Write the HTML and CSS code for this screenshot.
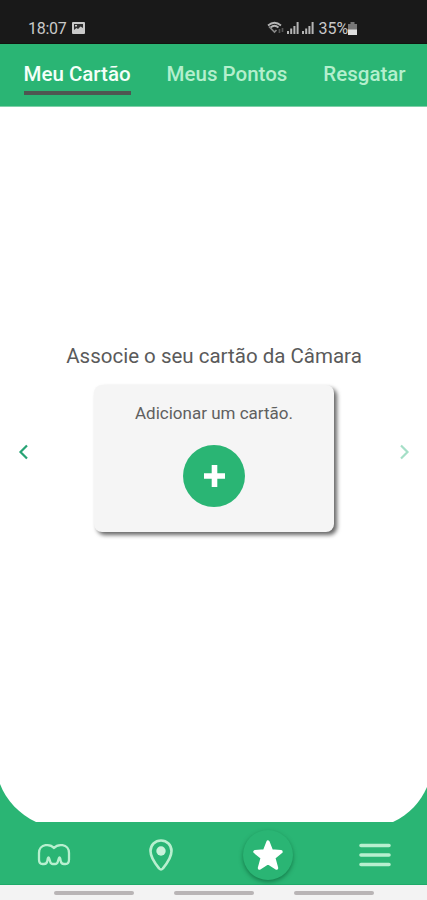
FILE: index.html
```
<!DOCTYPE html>
<html lang="pt">
<head>
  <meta charset="utf-8">
  <meta name="viewport" content="width=device-width, initial-scale=1">
  <title>Meu Cartão</title>
  <link rel="stylesheet" href="styles.css">
</head>
<body>

<div class="app">

  <div class="status-bar">
    <span class="clock">18:07</span>
    <svg class="photo-icon" width="13" height="12" viewBox="0 0 13 12">
      <rect width="13" height="12" rx="1" fill="#c9c9c9"/>
      <path d="M2 2h9v4L8.500 4.500 6 7 4.500 6 2 8z" fill="#303030"/>
      <rect x="3" y="3" width="2" height="1.500" fill="#c9c9c9"/>
    </svg>
    <div class="status-right">
      <svg width="17" height="14" viewBox="0 0 17 14" fill="none" stroke="#b5b5b5" stroke-width="1.700">
        <path d="M1 4.500Q7.500-1 14 4.500M3.500 6.500Q7.500 3 11.500 6.500"/>
        <path d="M2 5.500 7.500 11l2-2" stroke="#888"/>
        <path d="M12.500 8v4M15.500 7v4" stroke="#555"/>
      </svg>
      <svg class="signal" width="12" height="12" viewBox="0 0 12 12" fill="#b5b5b5">
        <path d="M0 9h2v3H0zM3.200 6.500h2V12h-2zM6.400 4h2v8h-2zM9.600 0h2v12h-2z"/>
      </svg>
      <svg class="signal" width="12" height="12" viewBox="0 0 12 12" fill="#b5b5b5">
        <path d="M0 9h2v3H0zM3.200 6.500h2V12h-2zM6.400 4h2v8h-2zM9.600 0h2v12h-2z"/>
      </svg>
      <span class="battery">35%</span>
      <svg width="9" height="13" viewBox="0 0 9 13">
        <path d="M2.500 0h4v2H9v6H0V2h2.500z" fill="#777"/>
        <path d="M0 7.500h9V13H0z" fill="#dedede"/>
      </svg>
    </div>
  </div>

  <div class="tabs">
    <div class="tab active">Meu Cartão</div>
    <div class="tab">Meus Pontos</div>
    <div class="tab">Resgatar</div>
  </div>

  <div class="content">
    <svg class="arrow" width="11" height="16" viewBox="0 0 11 16">
      <path d="M9 1.500 2.500 8 9 14.500" fill="none" stroke="#27a374" stroke-width="2.200"/>
    </svg>
    <div class="card-area">
      <div class="card-title">Associe o seu cartão da Câmara</div>
      <div class="card">
        <div class="card-text">Adicionar um cartão.</div>
        <div class="add-button">
          <svg width="24" height="24" viewBox="0 0 24 24">
            <path d="M12.500 1v22M2 12h21" stroke="#fff" stroke-width="5.600"/>
          </svg>
        </div>
      </div>
    </div>
    <svg class="arrow" width="11" height="16" viewBox="0 0 11 16">
      <path d="M2 1.500 8.500 8 2 14.500" fill="none" stroke="#a5dfc7" stroke-width="2.200"/>
    </svg>
  </div>

  <!-- white sheet closing over the green nav -->
  <svg class="curve" width="427" height="38" viewBox="0 0 427 38">
    <path d="M0 0C6 16 20 31 36 38H393C409 31 421 17 427 3V0z" fill="#fff"/>
  </svg>

  <div class="nav">
    <div class="nav-item">
      <svg width="34" height="24" viewBox="0 0 34 24">
        <path d="M17 5C14.500 2 11 1.800 8.500 2.200 4.500 2.800 2 6 2 10V16.500C2 19.500 3.200 21 5.500 21H7C9 21 10 19.800 10.300 18L10.800 15.500Q11.500 13.500 12.200 15.500L13.200 18.700C13.700 20.500 14.500 21 15.800 21H18.200C19.500 21 20.300 20.500 20.800 18.700L21.800 15.500Q22.500 13.500 23.200 15.500L23.700 18C24 19.800 25 21 27 21H28.500C30.800 21 32 19.500 32 16.500V10C32 6 29.500 2.800 25.500 2.200 23 1.800 19.500 2 17 5z" fill="none" stroke="#b8efcf" stroke-width="2.300" stroke-linejoin="round"/>
      </svg>
    </div>
    <div class="nav-item">
      <svg width="26" height="34" viewBox="0 0 26 34">
        <path d="M13 2.500C7 2.500 2.500 7 2.500 13 2.500 20 7.500 26 11.200 30.500Q13 32.500 14.800 30.500C18.500 26 23.500 20 23.500 13 23.500 7 19 2.500 13 2.500z" fill="none" stroke="#b8efcf" stroke-width="2.600"/>
        <circle cx="13" cy="13" r="4.700" fill="#c9f2da"/>
      </svg>
    </div>
    <div class="nav-item">
      <div class="star-button">
        <svg width="32" height="32" viewBox="0 0 32 32">
          <path d="M16 3 19.500 12 29 12.800 21.700 18.700 24.500 29 16 23.500 7.500 29 10.300 18.700 3 12.800 12.500 12z" fill="#fff" stroke="#fff" stroke-width="3.400" stroke-linejoin="round"/>
        </svg>
      </div>
    </div>
    <div class="nav-item">
      <svg width="32" height="24" viewBox="0 0 32 24">
        <path d="M2 2.500h28M2 12h28M2 21.500h28" stroke="#b8efcf" stroke-width="3.600" stroke-linecap="round"/>
      </svg>
    </div>
  </div>

  <div class="system-bar">
    <span></span>
    <span></span>
    <span></span>
  </div>

</div>

</body>
</html>
```

FILE: styles.css
```
* {
  box-sizing: border-box;
}

body {
  margin: 0;
  font-family: Roboto, "Liberation Sans", sans-serif;
  background-color: #fff;
}

svg {
  display: block;
  flex: none;
}

.app {
  display: flex;
  flex-direction: column;
  width: 427px;
  height: 900px;
  overflow: hidden;
}

.status-bar {
  display: flex;
  align-items: center;
  height: 44px;
  padding: 13px 70px 0 28px;
  background-color: #191919;
  border-bottom: 1px solid #10150f;
  color: #c9c9c9;
  font-size: 16px;
}

.clock {
  letter-spacing: -0.300px;
}

.photo-icon {
  margin-left: 6px;
}

.status-right {
  display: flex;
  align-items: center;
  margin-left: auto;
}

.signal {
  margin-left: 3px;
}

.battery {
  margin: 0 0 0 5px;
  letter-spacing: -0.100px;
}

.tabs {
  display: flex;
  align-items: flex-start;
  gap: 36px;
  height: 63px;
  padding: 16px 0 0 23.500px;
  background-color: #2ab574;
  border-bottom: 1px solid #7fd0a9;
}

.tab {
  height: 36px;
  line-height: 28px;
  font-size: 20.500px;
  font-weight: 500;
  color: #b4efcd;
  white-space: nowrap;
}

.tab.active {
  height: 35px;
  color: #f4fff9;
  border-bottom: 4px solid #4e5651;
}

.content {
  display: flex;
  flex: 1;
  justify-content: space-between;
  align-items: flex-start;
  padding: 236px 17px 0 18px;
}

.arrow {
  margin-top: 101px;
}

.card-area {
  display: flex;
  flex-direction: column;
  align-items: center;
}

.card-title {
  line-height: 26px;
  font-size: 20.500px;
  color: #5a5a5a;
  white-space: nowrap;
}

.card {
  display: flex;
  flex-direction: column;
  align-items: center;
  width: 240px;
  height: 147px;
  margin-top: 16px;
  padding-top: 17px;
  border-radius: 8px;
  background-color: #f5f5f5;
  box-shadow: 3px 3px 4px rgba(0, 0, 0, 0.600);
}

.card-text {
  line-height: 22px;
  font-size: 17px;
  color: #606060;
  white-space: nowrap;
}

.add-button {
  display: flex;
  align-items: center;
  justify-content: center;
  width: 62px;
  height: 62px;
  margin-top: 21px;
  border-radius: 50%;
  background-color: #2ab574;
}

.curve {
  background-color: #2ab574;
}

.nav {
  display: flex;
  align-items: center;
  height: 63px;
  background-color: #2ab574;
  border-bottom: 1px solid #1faa69;
}

.nav-item {
  display: flex;
  flex: none;
  justify-content: center;
  width: 107.200px;
  padding-top: 3px;
}

.star-button {
  display: flex;
  align-items: center;
  justify-content: center;
  width: 50px;
  height: 50px;
  border-radius: 50%;
  background-color: #2ab574;
  box-shadow: 0 2px 4px rgba(0, 70, 35, 0.500);
}

.system-bar {
  display: flex;
  justify-content: center;
  gap: 40px;
  height: 15px;
  padding: 6px 0 0 1px;
  background-color: #f3f3f3;
}

.system-bar span {
  width: 80px;
  height: 4px;
  border-radius: 2px;
  background-color: #b9b5b6;
}
```
